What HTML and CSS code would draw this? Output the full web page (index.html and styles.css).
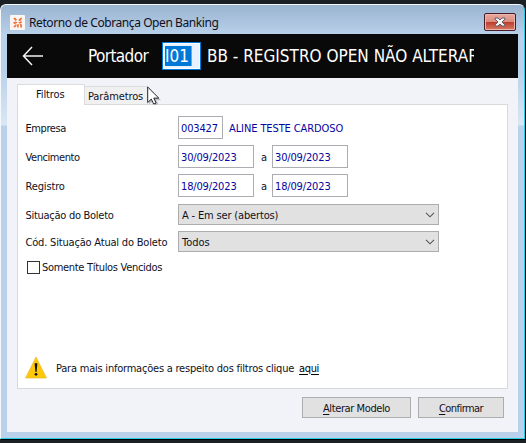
FILE: index.html
```html
<!DOCTYPE html>
<html lang="pt-BR">
<head>
<meta charset="utf-8">
<title>Retorno de Cobrança Open Banking</title>
<link rel="stylesheet" href="styles.css">
</head>
<body>
<div class="window">
  <div class="titlebar">
    <svg class="logo" width="15" height="15" viewBox="0 0 15 15"><rect width="15" height="15" rx="1" fill="#fbf5f4"/><path d="M3.2 3.5L5 2.5l2 2.2L5.6 6zM8.2 5l3-2.7.8 1.2-1.8 3zM3 7.2l3-.7 1.7 1.2-3.4 1.6zM8.3 7.2l3-1 .8 1.6-2.2 1zM3.2 11.8l2.5-2.6 1.3.8-2 2.6zM7 9.5l1.8-.5v3.5H7.2zM9.8 8.8l2.2.8v3h-1.6z" fill="#f0763c"/></svg>
    <span class="title">Retorno de Cobrança Open Banking</span>
    <button class="close" aria-label="Fechar"><svg width="12" height="10" viewBox="0 0 12 10"><path d="M1 1h3l2 2 2-2h3v1L8 5l3 3v1H8L6 7 4 9H1V8l3-3-3-3z" fill="#f4f4f5" stroke="#60606c" stroke-width="1"/></svg></button>
  </div>
  <div class="content">
    <header class="header">
      <svg class="back" width="22" height="20" viewBox="0 0 22 20"><path d="M10 1L1.5 10L10 19M1.5 10H21" fill="none" stroke="#f2f2f2" stroke-width="1.5"/></svg>
      <span class="holder">Portador</span>
      <span class="code"><span class="selected">I01</span></span>
      <span class="bank"><span>BB - REGISTRO OPEN NÃO ALTERAR</span></span>
    </header>
    <nav class="tabs">
      <span class="tab active">Filtros</span>
      <span class="tab">Parâmetros</span>
    </nav>
    <main class="panel">
      <div class="row"><span class="label l1">Empresa</span><span class="field short">003427</span><span class="company">ALINE TESTE CARDOSO</span></div>
      <div class="row"><span class="label l1">Vencimento</span><span class="field">30/09/2023</span><span class="sep">a</span><span class="field">30/09/2023</span></div>
      <div class="row"><span class="label l3">Registro</span><span class="field">18/09/2023</span><span class="sep">a</span><span class="field">18/09/2023</span></div>
      <div class="row select-row"><span class="label l4">Situação do Boleto</span><span class="select"><span class="s1">A - Em ser (abertos)</span><svg width="10" height="6" viewBox="0 0 10 6"><path d="M1 .8l4 4 4-4" fill="none" stroke="#555" stroke-width="1.1"/></svg></span></div>
      <div class="row select-row"><span class="label l5">Cód. Situação Atual do Boleto</span><span class="select"><span>Todos</span><svg width="10" height="6" viewBox="0 0 10 6"><path d="M1 .8l4 4 4-4" fill="none" stroke="#555" stroke-width="1.1"/></svg></span></div>
      <div class="check"><span class="box"></span><span class="l6">Somente Títulos Vencidos</span></div>
      <div class="info">
        <svg width="22" height="23" viewBox="0 0 22 23"><path d="M11 1L21.4 22H.6z" fill="#ffc90a" stroke="#e4b72c" stroke-width=".7" stroke-linejoin="round"/><path d="M9.6 7.5q1.4-1.2 2.8 0L11.6 16h-1.2z" fill="#171309"/><circle cx="11" cy="18.3" r="1.4" fill="#171309"/></svg>
        <span class="l7">Para mais informações a respeito dos filtros clique</span><a class="link">aqui</a>
      </div>
    </main>
    <footer class="footer">
      <button class="btn modify"><span><u>A</u>lterar Modelo</span></button>
      <button class="btn confirm"><span><u>C</u>onfirmar</span></button>
    </footer>
  </div>
</div>
<svg class="cursor" width="16" height="22" viewBox="0 0 16 22"><path d="M2 3.5V18l4-2.5 2.5 3.7 2.7-1.4-2-3.6H14z" fill="#555" opacity=".35"/><path d="M.7 1v15.5l3.6-3.4 2.4 5 2.4-1.1-2.3-4.9h5z" fill="#fff" stroke="#25252d" stroke-width="1"/></svg>
</body>
</html>
```
FILE: styles.css
```css
* { box-sizing: border-box; }
body {
  margin: 0;
  width: 526px;
  height: 443px;
  padding-top: 4px;
  overflow: hidden;
  background: #1b2024;
  font: 11px/14px "DejaVu Sans Condensed", "DejaVu Sans", sans-serif;
  font-stretch: condensed;
  color: #10101c;
  white-space: nowrap;
}
.window {
  width: 525px;
  height: 435px;
  padding: 0 6px 6px;
  border: 1px solid #f5f9fc;
  border-right-color: #27cce5;
  border-bottom-color: #27cce5;
  border-radius: 6px 6px 0 0;
  background: linear-gradient(#9ab3d0, #b9d1ea 30px, #b9d1ea 65px, #d9e7f5 120px, #b9d1ea 121px);
  box-shadow: 1px 1px 0 #000;
}
.titlebar { height: 29px; display: flex; align-items: flex-start; padding: 8px 2px 0 3px; }
.logo { margin-top: 2px; }
.title { font: 12px/18px "Noto Sans", sans-serif; letter-spacing: -.42px; margin: 1px 0 0 4px; }
.close {
  width: 32px; height: 18px; margin-left: auto; padding: 0;
  display: flex; align-items: center; justify-content: center;
  border: 1px solid #491b29; border-radius: 2px;
  background: linear-gradient(#e9a99f, #dc8d81 47%, #bc3b28 50%, #d77c66);
  box-shadow: inset 0 0 0 1px #e9b5ac;
}
.content { height: 398px; background: #f2f3f9; }
.header {
  height: 44px; display: flex; align-items: center; padding-left: 15px;
  background: #090909; color: #fff; font-size: 17px; line-height: 24px;
}
.holder { width: 61px; margin-left: 44px; letter-spacing: -.6px; }
.code { width: 39px; height: 28px; margin-left: 13px; padding: 1px; border: 1px solid #0078d7; background: #e8f1fe; box-shadow: inset 0 0 0 1px #fff; }
.selected { display: block; width: 27px; height: 20px; margin: 2px 0 0 1px; line-height: 20px; background: #0078d7; border-right: 1px solid #e58a46; }
.bank { width: 267px; margin-left: 6px; overflow: hidden; }
.tabs { height: 26px; padding: 6px 0 0 10px; display: flex; align-items: flex-end; }
.tab { height: 18px; width: 63px; padding: 3px 0 0 3px; border: 1px solid #dcdcdc; border-left: 0; border-bottom: 0; background: #f0f0f0; letter-spacing: -.12px; }
.tab.active { position: relative; height: 21px; width: 68px; margin-bottom: -1px; padding: 3px 0 0 18px; border-left: 1px solid #dcdcdc; background: #fff; }
.panel { width: 491px; height: 285px; margin-left: 10px; padding: 11px 0 0 7px; border: 1px solid #d9d9d9; background: #fff; }
.row { height: 23px; margin-bottom: 6px; display: flex; align-items: center; }
.label { width: 153px; padding: 2px 0 0 .5px; }
.l1 { letter-spacing: -.42px; }
.l3 { letter-spacing: -.15px; }
.l4 { letter-spacing: -.28px; }
.l5 { letter-spacing: -.19px; padding-top: 3px; }
.l6 { letter-spacing: -.31px; padding-top: 2px; }
.field { width: 76px; height: 23px; padding: 5px 0 0 2px; border: 1px solid #abadb3; background: #fff; color: #0505a0; letter-spacing: -.15px; }
.short { width: 45px; }
.company { margin-left: 6px; padding-top: 2px; color: #0505a0; letter-spacing: -.1px; }
.sep { width: 18px; padding: 2px 0 0 7px; }
.select-row { height: 21px; }
.row:nth-child(3) { margin-bottom: 7px; }
.select { display: flex; align-items: center; justify-content: space-between; width: 261px; height: 21px; padding: 0 3px; border: 1px solid #adadad; background: #e1e1e1; }
.select span { padding-top: 2px; }
.s1 { letter-spacing: -.16px; }
.check { height: 14px; margin-top: 8px; display: flex; align-items: center; }
.box { width: 13px; height: 13px; margin: 0 2px; border: 1px solid #333; background: #fff; }
.info { height: 23px; display: flex; align-items: center; margin-top: 82px; }
.l7 { margin-left: 9px; padding-top: 2px; letter-spacing: -.22px; }
.link { margin-left: 5px; padding-top: 2px; letter-spacing: -.4px; text-decoration: underline; text-underline-offset: 2px; color: #000; }
.footer { padding: 8px 14px 0 0; display: flex; justify-content: flex-end; gap: 7px; }
.btn { width: 86px; height: 21px; padding: 2px 0 0; border: 1px solid #adadad; background: #e1e1e1; font: inherit; color: inherit; }
.modify { width: 109px; letter-spacing: -.4px; }
.confirm { letter-spacing: -.55px; }
.btn u { text-underline-offset: 2px; }
.cursor { position: absolute; left: 147px; top: 86px; }
```
